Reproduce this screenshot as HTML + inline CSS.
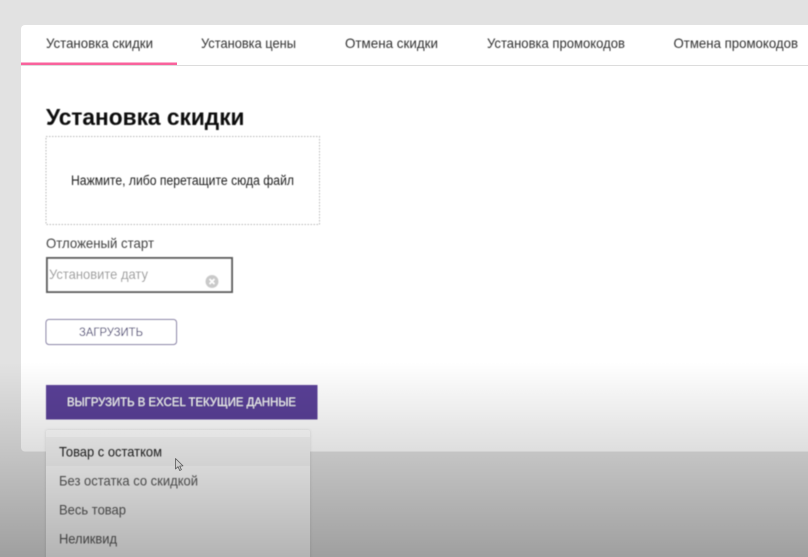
<!DOCTYPE html>
<html lang="ru"><head><meta charset="utf-8"><style>
html,body{margin:0;padding:0;width:808px;height:557px;overflow:hidden;background:#e2e2e2}
svg{display:block}
text{font-family:"Liberation Sans",sans-serif}
</style></head><body>
<svg xmlns="http://www.w3.org/2000/svg" width="808" height="557" viewBox="0 0 808 557">
<defs>
<linearGradient id="ov" x1="0" y1="0" x2="0" y2="1">
<stop offset="0" stop-color="#000" stop-opacity="0"/>
<stop offset=".46" stop-color="#000" stop-opacity=".13"/>
<stop offset="1" stop-color="#000" stop-opacity=".295"/>
</linearGradient>
<filter id="s" x="-10%" y="-10%" width="120%" height="120%"><feGaussianBlur stdDeviation="1.5"/></filter>
<filter id="b" x="-5%" y="-5%" width="110%" height="110%"><feGaussianBlur stdDeviation=".45"/></filter>
</defs>
<rect width="808" height="557" fill="#e2e2e2"/>
<rect x="21" y="25" width="800" height="426.500" rx="4" fill="#fff"/>
<rect x="21" y="65" width="787" height="1" fill="#dcdcdc"/>
<rect x="21" y="62.500" width="156" height="2.500" fill="#f9629c"/>
<g filter="url(#b)">
<g font-size="14" fill="#333">
<text x="46" y="48" textLength="107" lengthAdjust="spacingAndGlyphs">Установка скидки</text>
<text x="201" y="48" textLength="95" lengthAdjust="spacingAndGlyphs">Установка цены</text>
<text x="345" y="48" textLength="93" lengthAdjust="spacingAndGlyphs">Отмена скидки</text>
<text x="487" y="48" textLength="138" lengthAdjust="spacingAndGlyphs">Установка промокодов</text>
<text x="673.500" y="48" textLength="124.500" lengthAdjust="spacingAndGlyphs">Отмена промокодов</text>
</g>
<text x="46" y="125" font-size="23" font-weight="700" fill="#0c0c0c" textLength="198.500" lengthAdjust="spacingAndGlyphs">Установка скидки</text>
<rect x="46" y="136.500" width="273.500" height="88" fill="none" stroke="#b8b8b8" stroke-width="1" stroke-dasharray="1.500 1.500"/>
<text x="71" y="185" font-size="13.500" fill="#222" textLength="223" lengthAdjust="spacingAndGlyphs">Нажмите, либо перетащите сюда файл</text>
<text x="46" y="248" font-size="14" fill="#444" textLength="108" lengthAdjust="spacingAndGlyphs">Отложеный старт</text>
<rect x="47" y="258" width="185" height="34" fill="#fff" stroke="#5e5e5e" stroke-width="2"/>
<text x="49" y="279" font-size="14" fill="#999" textLength="99" lengthAdjust="spacingAndGlyphs">Установите дату</text>
<circle cx="212" cy="281.500" r="6.500" fill="#c9c9c9"/>
<path d="M209.500 279l5 5M214.500 279l-5 5" stroke="#fff" stroke-width="1.600" fill="none"/>
<rect x="46" y="319.500" width="130.500" height="25" rx="3" fill="#fff" stroke="#7d749f" stroke-width="1"/>
<text x="79" y="336" font-size="12" fill="#4a4476" textLength="64" lengthAdjust="spacingAndGlyphs">ЗАГРУЗИТЬ</text>
<rect x="46" y="385" width="271.500" height="34.500" fill="#5a3f98"/>
<text x="67" y="406" font-size="12" fill="#fff" textLength="229" lengthAdjust="spacingAndGlyphs">ВЫГРУЗИТЬ В EXCEL ТЕКУЩИЕ ДАННЫЕ</text>
</g>
<rect x="46" y="430" width="264" height="140" fill="#000" opacity=".12" filter="url(#s)"/>
<rect x="46" y="430" width="264" height="140" rx="2" fill="#fff"/>
<rect x="46" y="437" width="264" height="29" fill="#f7f7f7"/>
<g filter="url(#b)" font-size="14">
<text x="59" y="456.500" fill="#222" textLength="103" lengthAdjust="spacingAndGlyphs">Товар с остатком</text>
<text x="59" y="485.500" fill="#595959" textLength="139" lengthAdjust="spacingAndGlyphs">Без остатка со скидкой</text>
<text x="59" y="514.500" fill="#595959" textLength="67" lengthAdjust="spacingAndGlyphs">Весь товар</text>
<text x="59" y="543.500" fill="#595959" textLength="58" lengthAdjust="spacingAndGlyphs">Неликвид</text>
</g>
<path d="M175.500 458.500v10.500l2.500-2.300 1.700 3.800 1.700-.8-1.700-3.600 3.300-.2z" fill="#f2f2f2" stroke="#666" stroke-width=".8" stroke-linejoin="round"/>
<rect x="0" y="362" width="808" height="195" fill="url(#ov)"/>
</svg>
</body></html>
